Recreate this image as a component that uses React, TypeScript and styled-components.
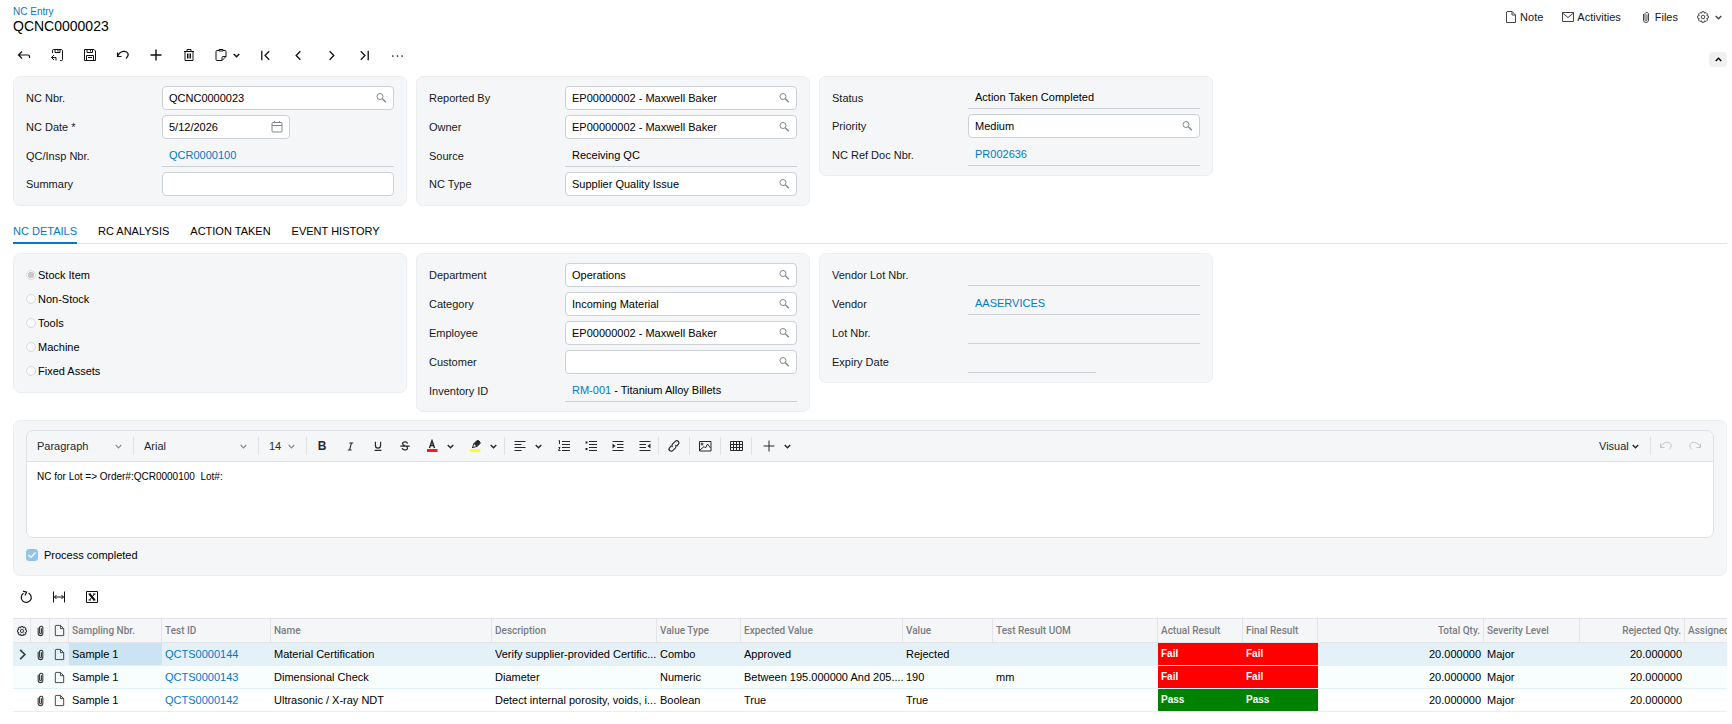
import React from "react";
import styled, { createGlobalStyle, css } from "styled-components";

const c = {
  text: "#16181b",
  link: "#0278cf",
  panel: "#f5f6f8",
  panelLine: "#eceef0",
  line: "#cdd0d6",
  soft: "#dfe1e4",
  head: "#7b7d83",
  fail: "#ff0000",
  pass: "#008200",
};

const GlobalStyle = createGlobalStyle`
  *, *::before, *::after { box-sizing: border-box; }
  body {
    margin: 0;
    background: #fff;
    color: ${c.text};
    font: 11px/14px "Liberation Sans", Arial, sans-serif;
  }
  input, select, textarea, button { font: inherit; color: inherit; margin: 0; }
  svg { display: block; flex: none; }
`;

/* ---------- icons ---------- */

const paths = {
  back: <path d="M5 3.5 1.5 7 5 10.5M1.5 7H11a1.5 1.5 0 0 1 1.5 1.5V10" />,
  saveClose: (
    <path d="M2.500 5V2.500a1 1 0 0 1 1-1h8l1 1v9a1 1 0 0 1-1 1H10M5 1.500v3h5v-3M8 2v1.500M4 7 1.500 9.500 4 12M1.500 9.500h4.500v3" />
  ),
  save: <path d="M1.5 1.5h9.500l1.500 1.500v9.500h-11zM4 1.500v3h5.500v-3M3.500 12.500v-5h7v5M5 9.500h4M7.500 2v1.500" />,
  undo: <path d="M1.500 4.500v4h4M1.500 8.500C4 2.500 10.500 2 12 5.500c.8 2-.5 3.500-2 5" />,
  redo: <path d="M12.500 4.500v4h-4M12.500 8.500C10 2.500 3.500 2 2 5.500c-.8 2 .5 3.500 2 5" />,
  plus: <path d="M7 1.500v11M1.500 7h11" />,
  trash: <path d="M2 3.500h10M5 3.500v-2h4v2M3 3.500v9h8v-9M5.500 5.500v5M7 5.500v5M8.500 5.500v5" />,
  paste: (
    <path d="M5 2.500H3a1 1 0 0 0-1 1v8a1 1 0 0 0 1 1h5l4-4v-5a1 1 0 0 0-1-1H9M5 1.500h4v1.500H5zM8 12.500v-3a1 1 0 0 1 1-1h3" />
  ),
  first: <path d="M3 2v10M11 2.500 6.500 7l4.500 4.500" />,
  prev: <path d="M9 2.500 4.500 7 9 11.500" />,
  next: <path d="M5 2.500 9.500 7 5 11.500" />,
  last: <path d="M11 2v10M3 2.500 7.500 7 3 11.500" />,
  more: (
    <g fill="currentColor" stroke="none">
      <circle cx="2" cy="7.500" r="0.900" />
      <circle cx="7" cy="7.500" r="0.900" />
      <circle cx="12" cy="7.500" r="0.900" />
    </g>
  ),
  note: <path d="M2.500 2v10.500h9V5l-3.500-3.500H3zM8 1.500V5h3.500" />,
  mail: <path d="M1.500 2.500h11v9h-11zM1.500 3 7 7.500 12.500 3" />,
  clip: <path d="M4.500 4v6a2.500 2.500 0 0 0 5 0V3.500a2 2 0 0 0-3.500 0V9.500a1 1 0 0 0 2 0V4.500" />,
  gear: (
    <>
      <circle cx="7" cy="7" r="1.800" />
      <path d="M5.900 1.700h2.200l.4 1.500 1.500-.7 1.500 1.500-.7 1.500 1.500.4v2.200l-1.500.4.7 1.500-1.500 1.500-1.500-.7-.4 1.500H5.900l-.4-1.500-1.500.7L2.500 10l.7-1.500-1.500-.4V5.900l1.500-.4L2.500 4 4 2.500l1.500.7z" />
    </>
  ),
  search: (
    <>
      <circle cx="6" cy="5.500" r="3" />
      <path strokeWidth="1.400" d="m8.300 7.800 3.500 3.500" />
    </>
  ),
  calendar: <path d="M2 3.500a1 1 0 0 1 1-1h8a1 1 0 0 1 1 1V11a1 1 0 0 1-1 1H3a1 1 0 0 1-1-1zM2 5.500h10M4.500 1v2M9.500 1v2" />,
  refresh: <path d="M9.500 3A5 5 0 1 1 4.500 3.300M4 1.200l3.500 1L6 5.500" />,
  fit: <path d="M1.500 1.500v11M12.500 1.500v11M2.500 7h9M4.500 5 2.500 7l2 2M9.500 5l2 2-2 2" />,
  excel: (
    <>
      <path d="M1.500 1.500h11v11h-11z" />
      <path strokeWidth="2" d="m4.500 4 5 6" />
      <path d="m9.500 4-5 6M3.500 4h2.500M8 4h2.500M3.500 10H6M8 10h2.500" />
    </>
  ),
  italic: <path strokeWidth="1.400" d="M5.500 2.500h5M3.500 11.500h5M8.200 2.500l-2.400 9" />,
  underline: <path strokeWidth="1.400" d="M4 2v4.500a3 3 0 0 0 6 0V2M3 12h8" />,
  strike: (
    <path strokeWidth="1.400" d="M10 4.200C9.500 1.500 4.200 1.700 4.200 4.300 4.200 7 10 6.500 10 9.400 10 12.500 4 12.200 3.800 9.300M1.500 7.200h11" />
  ),
  textColor: (
    <>
      <path strokeWidth="1.500" d="M4.500 9 7 1.800 9.500 9M5 6.500h4" />
      <path stroke="#ff1a1a" strokeWidth="3" d="M2 11.500h10.500" />
    </>
  ),
  marker: (
    <>
      <path fill="currentColor" d="m6 4.500 3-3h1.500L12 3v1.500L9 7.500z" />
      <path d="M6 4.500 4.500 8.500 9 7.500M4 9l1-1" />
      <path stroke="#ffff1a" strokeWidth="3" d="M2 11.500h10.500" />
    </>
  ),
  align: <path d="M1.500 2.500h11M1.500 5.500h7M1.500 8.500h11M1.500 11.500h7" />,
  numbered: <path d="M5 2.500h8M5 5.500h8M5 8.500h8M5 11.500h8M1.500 2 2.500 1.500V5M1.500 8.500h1.500l-1.500 3h2" />,
  bullets: (
    <>
      <path d="M5 2.500h8M5 5.500h8M5 8.500h8M5 11.500h8" />
      <path strokeWidth="2" d="M1.500 3.500h2M1.500 10h2" />
    </>
  ),
  indent: (
    <>
      <path d="M1.500 2.500h11M6 5.500h6.500M6 8.500h6.500M1.500 11.500h11" />
      <path fill="currentColor" stroke="none" d="M1.500 4.500 4.500 7l-3 2.500z" />
    </>
  ),
  outdent: (
    <>
      <path d="M1.500 2.500h11M1.500 5.500H8M1.500 8.500H8M1.500 11.500h11" />
      <path fill="currentColor" stroke="none" d="M12.500 4.500 9.500 7l3 2.500z" />
    </>
  ),
  link: (
    <path
      strokeWidth="1.200"
      d="M5.500 8C4.600 6.900 4.800 6 5.500 5.200L8.300 2.400a2.100 2.100 0 0 1 3 3L9.800 7M8.500 6c.9 1.100.7 2 0 2.800l-2.800 2.800a2.100 2.100 0 0 1-3-3L4.200 7"
    />
  ),
  image: (
    <>
      <path d="M1.500 2.500h11.500v9.500h-11.500zM2 11l4-3.500 1.500 1.500L9.500 5l3 4" />
      <circle cx="4" cy="5" r="1" />
    </>
  ),
  table: <path d="M1.500 2.500h12v9h-12zM1.500 5.500h12M1.500 8.500h12M4.500 2.500v9M7.500 2.500v9M10.500 2.500v9" />,
  rowMark: <path strokeWidth="1.800" d="m4.500 2 5 5-5 5" />,
};

type IconName = keyof typeof paths;

const Icon = ({ name, size = 14, weight = 1 }: { name: IconName; size?: number; weight?: number }) => (
  <svg width={size} height={size} viewBox="0 0 14 14" fill="none" stroke="currentColor" strokeWidth={weight} aria-hidden="true">
    {paths[name]}
  </svg>
);

const Chevron = ({ up = false, soft = false }: { up?: boolean; soft?: boolean }) => (
  <svg width="7" height="5" viewBox="0 0 7 5" fill="none" stroke={soft ? "#8b8e94" : "currentColor"} strokeWidth={soft ? 1.2 : 1.4} aria-hidden="true">
    <path d={up ? "M.7 4 3.500 1.200 6.300 4" : "M.7 1 3.500 3.800 6.300 1"} />
  </svg>
);

/* ---------- page ---------- */

const Page = styled.main`
  padding: 6px 5px 10px 13px;
`;

const Header = styled.header`
  display: flex;
  justify-content: space-between;
  align-items: flex-start;
`;

const Crumb = styled.a`
  display: block;
  color: ${c.link};
  font-size: 10px;
  line-height: 12px;
  text-decoration: none;
`;

const Title = styled.h1`
  margin: 0;
  color: #000;
  font-size: 14px;
  font-weight: 400;
  line-height: 16px;
`;

const PageLinks = styled.nav`
  display: flex;
  align-items: center;
  gap: 18px;
  padding: 4px 5px 0 0;
`;

const PageLink = styled.button<{ $gap?: number }>`
  display: flex;
  align-items: center;
  gap: ${(p) => p.$gap ?? 2}px;
  padding: 0;
  border: 0;
  background: none;
  > svg { color: #44464a; }
`;

const ToolRow = styled.div`
  display: flex;
  justify-content: space-between;
  align-items: flex-end;
  margin: 9px 0;
`;

const Tools = styled.div`
  display: flex;
  gap: 11px;
`;

const Tool = styled.button`
  display: flex;
  align-items: center;
  justify-content: center;
  gap: 5px;
  min-width: 22px;
  height: 24px;
  padding: 0 3px;
  border: 0;
  background: none;
  color: #111;
`;

const Collapse = styled.button`
  display: grid;
  place-items: center;
  width: 18px;
  height: 15px;
  padding: 0;
  border: 0;
  border-radius: 4px;
  background: #f0f0f1;
  color: #000;
`;

const Columns = styled.div`
  display: grid;
  grid-template-columns: repeat(3, minmax(280px, 394px));
  gap: 9px;
  align-items: start;
`;

const panel = css`
  padding: 9px 12px;
  border: 1px solid ${c.panelLine};
  border-radius: 7px;
  background: ${c.panel};
`;

const Panel = styled.section<{ $gap?: number }>`
  ${panel}
  display: grid;
  gap: ${(p) => p.$gap ?? 5}px;
`;

const Row = styled.div`
  display: grid;
  grid-template-columns: 136px 1fr;
  align-items: center;
`;

const Box = styled.div<{ $short?: boolean }>`
  display: flex;
  align-items: center;
  width: ${(p) => (p.$short ? "55%" : "100%")};
  height: 24px;
  padding: 0 5px 0 6px;
  border: 1px solid ${c.line};
  border-radius: 4px;
  background: #fff;
`;

const TextInput = styled.input`
  flex: 1;
  min-width: 0;
  padding: 0;
  border: 0;
  outline: 0;
  background: none;
  color: #000;
`;

const BoxButton = styled.button`
  padding: 0;
  border: 0;
  background: none;
  color: #85878c;
`;

const ReadOnly = styled.output<{ $short?: boolean }>`
  display: block;
  width: ${(p) => (p.$short ? "55%" : "100%")};
  height: 23px;
  padding: 0 7px;
  border-bottom: 1px solid ${c.line};
  color: #000;
  line-height: 22px;
`;

const Link = styled.a`
  color: ${c.link};
  text-decoration: none;
`;

const idOf = (label: string) => label.toLowerCase().replace(/[^a-z]+/g, "-");

type FieldProps = { label: string; value?: string; icon?: "search" | "calendar" };

const Field = ({ label, value = "", icon }: FieldProps) => (
  <Row>
    <label htmlFor={idOf(label)}>{label}</label>
    <Box $short={icon === "calendar"}>
      <TextInput id={idOf(label)} defaultValue={value} />
      {icon && (
        <BoxButton type="button" aria-label={`${icon} ${label}`}>
          <Icon name={icon} />
        </BoxButton>
      )}
    </Box>
  </Row>
);

const Fixed = ({ label, short, children }: { label: string; short?: boolean; children?: React.ReactNode }) => (
  <Row>
    <label htmlFor={idOf(label)}>{label}</label>
    <ReadOnly id={idOf(label)} $short={short}>
      {children}
    </ReadOnly>
  </Row>
);

const Tabs = styled.div`
  display: flex;
  gap: 21px;
  height: 38px;
  margin-bottom: 9px;
  border-bottom: 1px solid #e4e5e7;
`;

const Tab = styled.button<{ $active?: boolean }>`
  margin-bottom: -1px;
  padding: 13px 0 0;
  border: 0;
  border-bottom: 2px solid ${(p) => (p.$active ? c.link : "transparent")};
  background: none;
  color: ${(p) => (p.$active ? c.link : "#000")};
`;

const Choices = styled.div`
  ${panel}
`;

const Choice = styled.label`
  display: flex;
  align-items: center;
  gap: 2px;
  height: 24px;
  color: #000;
`;

const Radio = styled.input`
  appearance: none;
  width: 10px;
  height: 10px;
  border: 1px solid #d9dbdd;
  border-radius: 50%;
  background: #f8f9fa;
  &:checked {
    background: radial-gradient(circle, #c6c8ca 0 3px, #f8f9fa 3px);
  }
`;

/* ---------- note editor ---------- */

const EditorPanel = styled.section`
  ${panel}
  margin-top: 8px;
`;

const Editor = styled.div`
  border: 1px solid ${c.soft};
  border-radius: 7px;
  overflow: hidden;
`;

const EditorBar = styled.div`
  display: flex;
  align-items: center;
  height: 31px;
  padding-right: 5px;
  border-bottom: 1px solid ${c.soft};
  color: #26282b;
`;

const Rule = styled.span`
  width: 1px;
  height: 18px;
  background: ${c.soft};
`;

const Spacer = styled.span`
  flex: 1;
`;

const Picker = styled.span<{ $w: number }>`
  display: grid;
  align-items: center;
  width: ${(p) => p.$w}px;
  > * { grid-area: 1 / 1; }
  > svg { justify-self: end; margin-right: 11px; pointer-events: none; }
`;

const Select = styled.select`
  appearance: none;
  width: 100%;
  padding: 0 0 0 10px;
  border: 0;
  outline: 0;
  background: none;
`;

const EditButton = styled.button<{ $w?: number }>`
  display: flex;
  align-items: center;
  justify-content: center;
  gap: 8px;
  width: ${(p) => p.$w ?? 27}px;
  height: 26px;
  padding: 0;
  border: 0;
  background: none;
  &:disabled { color: #c3c5c9; }
`;

const Bold = styled.b`
  font-size: 12px;
`;

const NoteText = styled.textarea`
  display: block;
  width: 100%;
  height: 75px;
  padding: 8px 10px;
  border: 0;
  outline: 0;
  resize: none;
  background: #fff;
  color: #000;
  font-size: 10px;
  line-height: 14px;
`;

const Check = styled.label`
  display: flex;
  align-items: center;
  gap: 6px;
  height: 18px;
  margin: 8px 0 2px;
  color: #000;
`;

const CheckMark = styled.span`
  display: grid;
  width: 12px;
  height: 12px;
  > * { grid-area: 1 / 1; }
  > svg { pointer-events: none; }
`;

const CheckInput = styled.input`
  appearance: none;
  width: 12px;
  height: 12px;
  border-radius: 3px;
  background: #93c5e9;
`;

const Choose = ({ label, value, w, soft = true }: { label: string; value: string; w: number; soft?: boolean }) => (
  <Picker $w={w}>
    <Select aria-label={label} defaultValue={value}>
      <option>{value}</option>
    </Select>
    <Chevron soft={soft} />
  </Picker>
);

/* ---------- results grid ---------- */

const GridTools = styled(Tools)`
  margin: 9px 0;
  padding-left: 2px;
`;

const GridWrap = styled.div`
  overflow: hidden;
`;

const Grid = styled.table`
  width: 100%;
  table-layout: fixed;
  border-collapse: separate;
  border-spacing: 0;
`;

const Th = styled.th<{ $right?: boolean }>`
  height: 25px;
  padding: 0 3px;
  border: solid #e2e4e7;
  border-width: 1px 1px 1px 0;
  background: ${c.panel};
  color: ${c.head};
  font: 500 10px/14px Roboto, sans-serif;
  text-align: ${(p) => (p.$right ? "right" : "left")};
  white-space: nowrap;
  > svg { color: #3a3c40; }
  &:last-child { border-right: 0; padding-right: 0; }
`;

const Tr = styled.tr<{ $bg: string }>`
  background: ${(p) => p.$bg};
`;

const Td = styled.td<{ $right?: boolean; $bg?: string }>`
  height: 23px;
  padding: 0 0 0 3px;
  padding-right: ${(p) => (p.$right ? 3 : 0)}px;
  border-bottom: 1px solid #e2f0f8;
  background: ${(p) => p.$bg ?? "transparent"};
  background-clip: padding-box;
  color: #000;
  text-align: ${(p) => (p.$right ? "right" : "left")};
  white-space: nowrap;
  > svg { color: #3a3c40; }
`;

const ResultCell = styled(Td)`
  color: #fff;
  font-size: 10px;
  font-weight: 700;
`;

const widths = [18, 19, 19, 93, 109, 221, 165, 84, 162, 90, 165, 85, 75, 166, 96, 105];

const heads = [
  "Sampling Nbr.", "Test ID", "Name", "Description", "Value Type", "Expected Value", "Value", "Test Result UOM",
  "Actual Result", "Final Result", "Total Qty.", "Severity Level", "Rejected Qty.", "Assigned",
];

const rows = [
  ["QCTS0000144", "Material Certification", "Verify supplier-provided Certific...", "Combo", "Approved", "Rejected", "", "Fail"],
  ["QCTS0000143", "Dimensional Check", "Diameter", "Numeric", "Between 195.000000 And 205....", "190", "mm", "Fail"],
  ["QCTS0000142", "Ultrasonic / X-ray NDT", "Detect internal porosity, voids, i...", "Boolean", "True", "True", "", "Pass"],
];

const rowColors = ["#e4f1f9", "#f8fdfe", "#ffffff"];

export default function App() {
  return (
    <>
      <GlobalStyle />
      <Page>
        <Header>
          <div>
            <Crumb href="#">NC Entry</Crumb>
            <Title>QCNC0000023</Title>
          </div>
          <PageLinks>
            <PageLink><Icon name="note" />Note</PageLink>
            <PageLink><Icon name="mail" />Activities</PageLink>
            <PageLink><Icon name="clip" />Files</PageLink>
            <PageLink $gap={5} aria-label="Settings"><Icon name="gear" /><Chevron /></PageLink>
          </PageLinks>
        </Header>

        <ToolRow>
          <Tools>
            <Tool aria-label="Back"><Icon name="back" weight={1.2} /></Tool>
            <Tool aria-label="Save and close"><Icon name="saveClose" /></Tool>
            <Tool aria-label="Save"><Icon name="save" /></Tool>
            <Tool aria-label="Undo"><Icon name="undo" weight={1.2} /></Tool>
            <Tool aria-label="Add"><Icon name="plus" weight={1.4} /></Tool>
            <Tool aria-label="Delete"><Icon name="trash" /></Tool>
            <Tool aria-label="Clipboard"><Icon name="paste" /><Chevron /></Tool>
            <Tool aria-label="First"><Icon name="first" weight={1.4} size={13} /></Tool>
            <Tool aria-label="Previous"><Icon name="prev" weight={1.4} size={13} /></Tool>
            <Tool aria-label="Next"><Icon name="next" weight={1.4} size={13} /></Tool>
            <Tool aria-label="Last"><Icon name="last" weight={1.4} size={13} /></Tool>
            <Tool aria-label="More"><Icon name="more" size={13} /></Tool>
          </Tools>
          <Collapse aria-label="Collapse"><Chevron up /></Collapse>
        </ToolRow>

        <Columns>
          <Panel>
            <Field label="NC Nbr." value="QCNC0000023" icon="search" />
            <Field label="NC Date *" value="5/12/2026" icon="calendar" />
            <Fixed label="QC/Insp Nbr."><Link href="#">QCR0000100</Link></Fixed>
            <Field label="Summary" />
          </Panel>
          <Panel>
            <Field label="Reported By" value="EP00000002 - Maxwell Baker" icon="search" />
            <Field label="Owner" value="EP00000002 - Maxwell Baker" icon="search" />
            <Fixed label="Source">Receiving QC</Fixed>
            <Field label="NC Type" value="Supplier Quality Issue" icon="search" />
          </Panel>
          <Panel>
            <Fixed label="Status">Action Taken Completed</Fixed>
            <Field label="Priority" value="Medium" icon="search" />
            <Fixed label="NC Ref Doc Nbr."><Link href="#">PR002636</Link></Fixed>
          </Panel>
        </Columns>

        <Tabs role="tablist">
          <Tab role="tab" aria-selected $active>NC DETAILS</Tab>
          <Tab role="tab">RC ANALYSIS</Tab>
          <Tab role="tab">ACTION TAKEN</Tab>
          <Tab role="tab">EVENT HISTORY</Tab>
        </Tabs>

        <Columns>
          <Choices role="radiogroup" aria-label="Item kind">
            {["Stock Item", "Non-Stock", "Tools", "Machine", "Fixed Assets"].map((name, i) => (
              <Choice key={name}>
                <Radio type="radio" name="kind" defaultChecked={i === 0} disabled />
                {name}
              </Choice>
            ))}
          </Choices>
          <Panel>
            <Field label="Department" value="Operations" icon="search" />
            <Field label="Category" value="Incoming Material" icon="search" />
            <Field label="Employee" value="EP00000002 - Maxwell Baker" icon="search" />
            <Field label="Customer" icon="search" />
            <Fixed label="Inventory ID"><Link href="#">RM-001</Link> - Titanium Alloy Billets</Fixed>
          </Panel>
          <Panel $gap={6}>
            <Fixed label="Vendor Lot Nbr." />
            <Fixed label="Vendor"><Link href="#">AASERVICES</Link></Fixed>
            <Fixed label="Lot Nbr." />
            <Fixed label="Expiry Date" short />
          </Panel>
        </Columns>

        <EditorPanel>
          <Editor>
            <EditorBar>
              <Choose label="Block style" value="Paragraph" w={106} />
              <Rule />
              <Choose label="Font" value="Arial" w={124} />
              <Rule />
              <Choose label="Font size" value="14" w={47} />
              <Rule />
              <EditButton $w={30} aria-label="Bold"><Bold>B</Bold></EditButton>
              <EditButton aria-label="Italic"><Icon name="italic" size={11} /></EditButton>
              <EditButton aria-label="Underline"><Icon name="underline" size={12} /></EditButton>
              <EditButton aria-label="Strikethrough"><Icon name="strike" size={12} /></EditButton>
              <EditButton $w={43} aria-label="Text colour"><Icon name="textColor" /><Chevron /></EditButton>
              <EditButton $w={43} aria-label="Highlight"><Icon name="marker" /><Chevron /></EditButton>
              <Rule />
              <EditButton $w={45} aria-label="Align"><Icon name="align" /><Chevron /></EditButton>
              <EditButton aria-label="Numbered list"><Icon name="numbered" /></EditButton>
              <EditButton aria-label="Bulleted list"><Icon name="bullets" /></EditButton>
              <EditButton aria-label="Indent"><Icon name="indent" /></EditButton>
              <EditButton aria-label="Outdent"><Icon name="outdent" /></EditButton>
              <Rule />
              <EditButton $w={30} aria-label="Link"><Icon name="link" /></EditButton>
              <Rule />
              <EditButton $w={30} aria-label="Image"><Icon name="image" /></EditButton>
              <Rule />
              <EditButton $w={30} aria-label="Table"><Icon name="table" /></EditButton>
              <Rule />
              <EditButton $w={48} aria-label="Insert"><Icon name="plus" /><Chevron /></EditButton>
              <Spacer />
              <Choose label="View" value="Visual" w={61} soft={false} />
              <Rule />
              <EditButton $w={30} disabled aria-label="Undo edit"><Icon name="undo" /></EditButton>
              <EditButton disabled aria-label="Redo edit"><Icon name="redo" /></EditButton>
            </EditorBar>
            <NoteText aria-label="Note" defaultValue={"NC for Lot => Order#:QCR0000100  Lot#:"} />
          </Editor>
          <Check>
            <CheckMark>
              <CheckInput type="checkbox" defaultChecked disabled />
              <svg width="12" height="12" viewBox="0 0 12 12" fill="none" stroke="#fff" strokeWidth="1.200" aria-hidden="true">
                <path d="m2.500 6 2.500 2.500 4.500-5" />
              </svg>
            </CheckMark>
            Process completed
          </Check>
        </EditorPanel>

        <GridTools>
          <Tool aria-label="Refresh"><Icon name="refresh" weight={1.2} /></Tool>
          <Tool aria-label="Fit columns"><Icon name="fit" /></Tool>
          <Tool aria-label="Export to Excel"><Icon name="excel" /></Tool>
        </GridTools>

        <GridWrap>
          <Grid>
            <colgroup>
              {widths.map((w, i) => (
                <col key={i} width={w} />
              ))}
              <col />
            </colgroup>
            <thead>
              <tr>
                <Th as="td"><Icon name="gear" size={12} weight={1.2} /></Th>
                <Th as="td"><Icon name="clip" size={13} weight={1.2} /></Th>
                <Th as="td"><Icon name="note" size={13} /></Th>
                {heads.map((h) => (
                  <Th key={h} scope="col" $right={h.endsWith("Qty.")}>{h}</Th>
                ))}
              </tr>
            </thead>
            <tbody>
              {rows.map(([id, name, desc, type, expected, value, uom, result], i) => {
                const tone = result === "Fail" ? c.fail : c.pass;
                return (
                  <Tr key={id} $bg={rowColors[i]}>
                    <Td>{i === 0 && <Icon name="rowMark" size={13} />}</Td>
                    <Td><Icon name="clip" size={13} weight={1.2} /></Td>
                    <Td><Icon name="note" size={13} /></Td>
                    <Td $bg={i === 0 ? "#cbe4f4" : undefined}>Sample 1</Td>
                    <Td><Link href="#">{id}</Link></Td>
                    <Td>{name}</Td>
                    <Td>{desc}</Td>
                    <Td>{type}</Td>
                    <Td>{expected}</Td>
                    <Td>{value}</Td>
                    <Td>{uom}</Td>
                    <ResultCell $bg={tone}>{result}</ResultCell>
                    <ResultCell $bg={tone}>{result}</ResultCell>
                    <Td $right>20.000000</Td>
                    <Td>Major</Td>
                    <Td $right>20.000000</Td>
                    <Td />
                  </Tr>
                );
              })}
            </tbody>
          </Grid>
        </GridWrap>
      </Page>
    </>
  );
}
